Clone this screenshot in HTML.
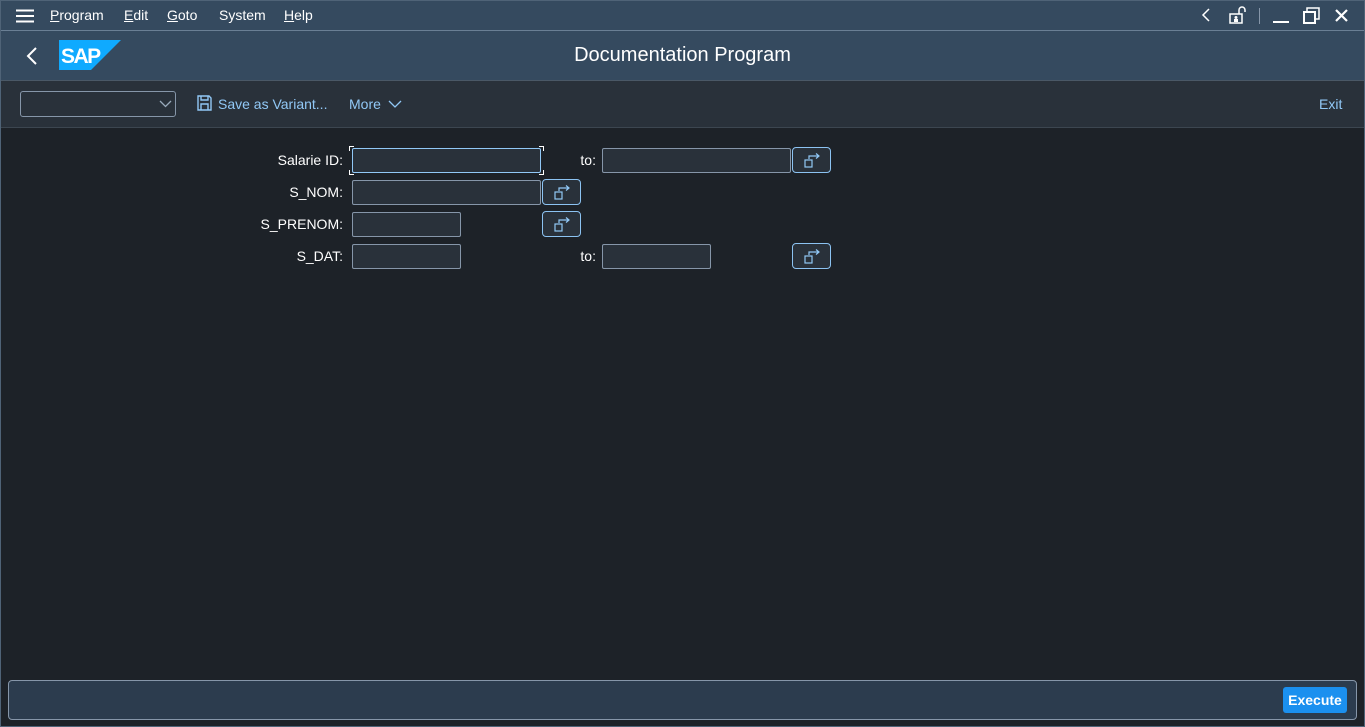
<!DOCTYPE html><html><head><style>
body{margin:0;width:1365px;height:727px;background:#1d2228;font-family:"Liberation Sans",sans-serif;position:relative;overflow:hidden}
.a{position:absolute}
.menu{left:0;top:0;width:1365px;height:31px;background:#354a5f;border-bottom:1px solid #6a7f94;box-sizing:border-box}
.menu span{position:absolute;top:7px;color:#fff;font-size:14px}
.hdr{left:0;top:31px;width:1365px;height:49px;background:#354a5f;border-bottom:1px solid #4a5866}
.tb{left:0;top:81px;width:1365px;height:46px;background:#29313a;border-bottom:1px solid #3c4650}
.lbl{color:#fff;font-size:14px;text-align:right}
.in{background:#29313a;border:1px solid #8696a9;border-radius:2px;height:23px;box-sizing:border-box}
.btn{border:1px solid #8cc3f2;border-radius:4px;width:39px;height:26px;box-sizing:border-box;background:#29313a}
.btn svg{position:absolute;left:11px;top:5px}
</style></head><body>
<div class="a menu">
<svg class="a" style="left:16px;top:9px" width="18" height="14"><path d="M0 1.5H18M0 7H18M0 12.5H18" stroke="#fff" stroke-width="2"/></svg>
<span style="left:50px"><u>P</u>rogram</span><span style="left:124px"><u>E</u>dit</span><span style="left:167px"><u>G</u>oto</span><span style="left:219px">System</span><span style="left:284px"><u>H</u>elp</span>
<svg class="a" style="left:1200px;top:7px" width="12" height="16"><path d="M9 2L3 8l6 6" stroke="#fff" stroke-width="1.5" fill="none"/></svg>
<svg class="a" style="left:1229px;top:6px" width="18" height="18"><rect x="1" y="8" width="12" height="9" fill="none" stroke="#fff" stroke-width="1.5"/><path d="M10 8V4a3 3 0 0 1 6 0v2" stroke="#fff" stroke-width="1.5" fill="none"/><circle cx="7" cy="11.5" r="1.5" fill="#fff"/><rect x="5" y="13" width="4" height="3" fill="#fff"/></svg>
<div class="a" style="left:1259px;top:8px;width:1px;height:16px;background:#8696a9"></div>
<div class="a" style="left:1273px;top:21px;width:16px;height:2px;background:#fff"></div>
<svg class="a" style="left:1303px;top:7px" width="18" height="18"><rect x="1" y="5" width="11" height="11" fill="none" stroke="#fff" stroke-width="2"/><path d="M4 4V1h12v11h-3" stroke="#fff" stroke-width="1.5" fill="none"/></svg>
<svg class="a" style="left:1335px;top:9px" width="13" height="13"><path d="M1 1L12 12M12 1L1 12" stroke="#fff" stroke-width="2.2"/></svg>
</div>
<div class="a hdr">
<svg class="a" style="left:26px;top:16px" width="12" height="18"><path d="M10 1L2 9l8 8" stroke="#fff" stroke-width="2" fill="none"/></svg>
<svg class="a" style="left:59px;top:9px" width="62" height="30"><polygon points="0,0 62,0 32,30 0,30" fill="#0faaff"/><text x="2" y="23" font-family="Liberation Sans" font-weight="bold" font-size="21" fill="#fff" letter-spacing="-1.5">SAP</text></svg>
<div class="a" style="left:0;width:1365px;top:13px;text-align:center;color:#fff;font-size:20px">Documentation Program</div>
</div>
<div class="a tb">
<div class="a in" style="left:20px;top:10px;width:156px;height:26px;border-radius:3px"></div>
<svg class="a" style="left:159px;top:19px" width="13" height="8"><path d="M1 1l5.5 5.5L12 1" stroke="#9ab" stroke-width="1.3" fill="none"/></svg>
<svg class="a" style="left:197px;top:14px" width="15" height="16"><path d="M1 1h11l2 2v12H1z M4 1v4h7V1 M4 15V9h7v6" stroke="#91c8f6" stroke-width="1.4" fill="none"/></svg>
<span class="a" style="left:218px;top:15px;color:#91c8f6;font-size:14px">Save as Variant...</span>
<span class="a" style="left:349px;top:15px;color:#91c8f6;font-size:14px">More</span>
<svg class="a" style="left:388px;top:19px" width="14" height="8"><path d="M1 1l6 6 6-6" stroke="#91c8f6" stroke-width="1.3" fill="none"/></svg>
<span class="a" style="left:1319px;top:15px;color:#91c8f6;font-size:14px">Exit</span>
</div>
<div class="a lbl" style="left:200px;width:143px;top:152px">Salarie ID:</div>
<div class="a lbl" style="left:200px;width:143px;top:184px">S_NOM:</div>
<div class="a lbl" style="left:200px;width:143px;top:216px">S_PRENOM:</div>
<div class="a lbl" style="left:200px;width:143px;top:248px">S_DAT:</div>
<div class="a lbl" style="left:560px;width:36px;top:152px">to:</div>
<div class="a lbl" style="left:560px;width:36px;top:248px">to:</div>
<div class="a in" style="left:352px;top:148px;width:189px;height:25px;border-color:#91c8f6"></div>
<div class="a" style="left:349px;top:146px;width:195px;height:29px;
background:linear-gradient(#fff,#fff) 0 0/5px 1px no-repeat,linear-gradient(#fff,#fff) 0 0/1px 5px no-repeat,linear-gradient(#fff,#fff) 100% 0/5px 1px no-repeat,linear-gradient(#fff,#fff) 100% 0/1px 5px no-repeat,linear-gradient(#fff,#fff) 0 100%/5px 1px no-repeat,linear-gradient(#fff,#fff) 0 100%/1px 5px no-repeat,linear-gradient(#fff,#fff) 100% 100%/5px 1px no-repeat,linear-gradient(#fff,#fff) 100% 100%/1px 5px no-repeat"></div>
<div class="a in" style="left:602px;top:148px;width:189px;height:25px"></div>
<div class="a in" style="left:352px;top:180px;width:189px;height:25px"></div>
<div class="a in" style="left:352px;top:212px;width:109px;height:25px"></div>
<div class="a in" style="left:352px;top:244px;width:109px;height:25px"></div>
<div class="a in" style="left:602px;top:244px;width:109px;height:25px"></div>
<div class="a btn" style="left:792px;top:147px"><svg width="18" height="16"><rect x="1" y="7" width="7" height="7" fill="none" stroke="#91c8f6" stroke-width="1.2"/><path d="M5 6V3h10M12 0.5l3 2.5-3 2.5" stroke="#91c8f6" stroke-width="1.2" fill="none"/></svg></div>
<div class="a btn" style="left:542px;top:179px"><svg width="18" height="16"><rect x="1" y="7" width="7" height="7" fill="none" stroke="#91c8f6" stroke-width="1.2"/><path d="M5 6V3h10M12 0.5l3 2.5-3 2.5" stroke="#91c8f6" stroke-width="1.2" fill="none"/></svg></div>
<div class="a btn" style="left:542px;top:211px"><svg width="18" height="16"><rect x="1" y="7" width="7" height="7" fill="none" stroke="#91c8f6" stroke-width="1.2"/><path d="M5 6V3h10M12 0.5l3 2.5-3 2.5" stroke="#91c8f6" stroke-width="1.2" fill="none"/></svg></div>
<div class="a btn" style="left:792px;top:243px"><svg width="18" height="16"><rect x="1" y="7" width="7" height="7" fill="none" stroke="#91c8f6" stroke-width="1.2"/><path d="M5 6V3h10M12 0.5l3 2.5-3 2.5" stroke="#91c8f6" stroke-width="1.2" fill="none"/></svg></div>
<div class="a" style="left:8px;top:680px;width:1349px;height:40px;background:#2c3c4e;border:1px solid #8696a9;border-radius:4px;box-sizing:border-box"></div>
<div class="a" style="left:1283px;top:687px;width:64px;height:26px;background:#1b90ef;border-radius:3px;color:#fff;font-weight:bold;font-size:14px;text-align:center;line-height:26px">Execute</div>
<div class="a" style="left:0;top:0;width:1365px;height:727px;border:1px solid #4f6377;box-sizing:border-box;pointer-events:none"></div>
</body></html>
